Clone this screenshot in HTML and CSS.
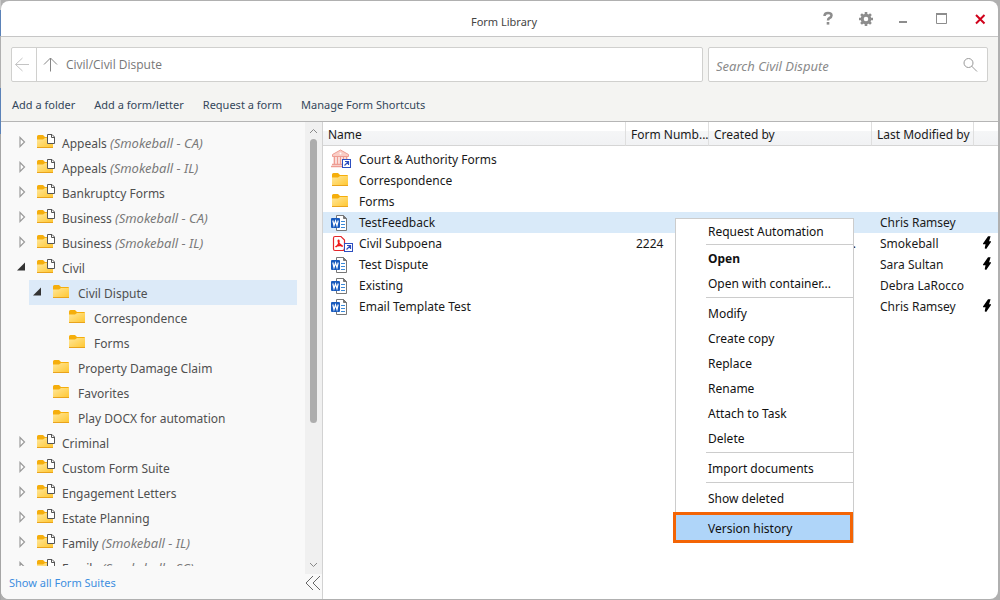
FILE: index.html
```html
<!DOCTYPE html>
<html lang="en">
<head>
<meta charset="utf-8">
<title>Form Library</title>
<link rel="stylesheet" href="styles.css">
</head>
<body>
<svg class="defs" aria-hidden="true">
  <defs>
    <linearGradient id="gold" x1="0" y1="0" x2="1" y2="1"><stop offset="0" stop-color="#ffe79a"/><stop offset="1" stop-color="#ffc62e"/></linearGradient>
    <symbol id="folder" viewBox="0 0 18 16"><path d="M0 2.5Q0 1 1.5 1H6L8 3H15Q16 3 16 4V6H0Z" fill="#f5ae0c"/><path d="M0 5.5H6L8 4H16V13Q16 14 15 14H1Q0 14 0 13Z" fill="url(#gold)"/><path d="M0 13.5H16" stroke="#e9a31c"/></symbol>
    <symbol id="suite" viewBox="0 0 18 16"><use href="#folder" width="18" height="16"/><path d="M10.5 .5H15L17.500 3V9.500H10.500Z" fill="#fff" stroke="#555"/><path d="M14.500 .5V3.500H17.500" fill="none" stroke="#555"/></symbol>
    <symbol id="closed" viewBox="0 0 10 12"><path d="M3 1.500L7.500 6L3 10.500Z" fill="#fff" stroke="#9b9b9b" stroke-width="1.200"/></symbol>
    <symbol id="opened" viewBox="0 0 10 12"><path d="M8 1.500V9.500H0Z" fill="#333"/></symbol>
    <symbol id="word" viewBox="0 0 22 20"><path d="M5.500 2.500H12.500L15.500 5.500V17.500H5.500Z" fill="#fff" stroke="#777"/><path d="M12.500 2.500V5.500H15.500Z" fill="#777" stroke="#777"/><path d="M10 8.500H14M10 11.500H14M10 14.500H14" stroke="#3c8ad8" stroke-width="1.200"/><rect y="5" width="9" height="10" rx="1" fill="#185abd"/><path d="M1.800 7.500L3 12.500L4.500 8L6 12.500L7.200 7.500" fill="none" stroke="#fff" stroke-width="1.200"/></symbol>
    <symbol id="shortcut" viewBox="0 0 9 9"><rect x=".5" y=".5" width="8" height="8" fill="#fff" stroke="#2d4fc0"/><path d="M2.500 6.500L6 3M3 2.500H6.500V6" fill="none" stroke="#2d4fc0" stroke-width="1.200"/></symbol>
    <symbol id="pdf" viewBox="0 0 22 20"><path d="M4 2.500H10L13.500 6V14Q13.500 16.500 11.500 16.500H4Q2.500 16.500 2.500 15V4Q2.500 2.500 4 2.500Z" fill="#fff" stroke="#e3262b" stroke-width="1.200"/><path d="M4.500 13Q8 11 8 7.500Q8 5.500 7.200 6.500Q7 9.500 11 11.800Q12 12.800 9.500 11.500Q6 11.200 4.500 13" fill="none" stroke="#f01818" stroke-width="1.400"/><use href="#shortcut" x="13" y="9" width="9" height="9"/></symbol>
    <symbol id="court" viewBox="0 0 22 20"><path d="M1.500 5.500L9.500 1L17.500 5.500V7.500H1.500Z" fill="#f9cdc6" stroke="#ee9d93"/><path d="M3.500 8V15M6.500 8V15M9.500 8V15M12.500 8V15M15.500 8V15" stroke="#ef9c92" stroke-width="1.700"/><path d="M1 15.500H18M0 17.500H18" stroke="#ee9d93" stroke-width="1.300"/><circle cx="9.500" cy="4.500" r="1" fill="#fff"/><use href="#shortcut" x="11" y="10" width="9" height="9"/></symbol>
    <symbol id="bolt" viewBox="0 0 8 14"><path d="M5.500 1L1 7.500H3.500L2.500 12.500L7 6H5L6.500 1Z" fill="#000" stroke="#000" stroke-width="1.600"/></symbol>
  </defs>
</svg>
<div class="window">
  <header class="titlebar">
    <h1 class="title">Form Library</h1>
    <div class="controls">
      <button class="control" aria-label="Help"><svg width="14" height="16" viewBox="0 0 14 16"><path d="M3.500 5Q3.500 2 7 2Q10.500 2 10.500 4.500Q10.500 6.200 8.500 7Q7 7.700 7 9.500" fill="none" stroke="#8d8d8d" stroke-width="2.500"/><rect x="5.700" y="11" width="2.600" height="2.600" fill="#8d8d8d"/></svg></button>
      <button class="control" aria-label="Settings"><svg width="14" height="14" viewBox="0 0 14 14"><circle cx="7" cy="7" r="3.800" fill="none" stroke="#8d8d8d" stroke-width="3"/><path d="M7 0V3M7 11V14M0 7H3M11 7H14M2.050 2.050L4 4M10 10L11.950 11.950M2.050 11.950L4 10M10 4L11.950 2.050" stroke="#8d8d8d" stroke-width="2.600"/></svg></button>
      <button class="control" aria-label="Minimize"><svg width="14" height="14" viewBox="0 0 14 14"><path d="M2 10H10" stroke="#8d8d8d" stroke-width="2"/></svg></button>
      <button class="control" aria-label="Maximize"><svg width="14" height="14" viewBox="0 0 14 14"><path d="M1.500 2V11.500H11.500V2" fill="none" stroke="#8d8d8d"/><path d="M1 2H12" stroke="#8d8d8d" stroke-width="2"/></svg></button>
      <button class="control" aria-label="Close"><svg width="14" height="14" viewBox="0 0 14 14"><path d="M3 3L11.500 11.500M11.500 3L3 11.500" stroke="#d0021b" stroke-width="2"/></svg></button>
    </div>
  </header>
  <section class="toolbar">
    <div class="bars">
      <div class="pathbar">
        <button class="back" aria-label="Back"><svg width="16" height="16" viewBox="0 0 16 16"><path d="M15 7.500H1.500M8.500 1L1.500 7.500L8.500 14" fill="none" stroke="#c4c4c4"/></svg></button>
        <button class="up" aria-label="Up"><svg width="16" height="16" viewBox="0 0 16 16"><path d="M7.500 14.500V1M1 7.500L7.500 1L14 7.500" fill="none" stroke="#858585"/></svg></button>
        <span>Civil/Civil Dispute</span>
      </div>
      <div class="searchbar">
        <input class="search" type="text" aria-label="Search Civil Dispute" placeholder="Search Civil Dispute">
        <svg width="16" height="16" viewBox="0 0 16 16"><circle cx="6.500" cy="6" r="4.500" fill="none" stroke="#999"/><path d="M9.500 9L15 14.500" stroke="#999"/></svg>
      </div>
    </div>
    <nav class="actions">
      <button class="action">Add a folder</button>
      <button class="action">Add a form/letter</button>
      <button class="action">Request a form</button>
      <button class="action">Manage Form Shortcuts</button>
    </nav>
  </section>
  <main class="content">
    <aside class="sidebar">
      <div class="treepane">
        <ul class="tree">
          <li><div class="node"><svg class="arrow"><use href="#closed"/></svg><svg class="nodeicon"><use href="#suite"/></svg><span>Appeals <i>(Smokeball - CA)</i></span></div></li>
          <li><div class="node"><svg class="arrow"><use href="#closed"/></svg><svg class="nodeicon"><use href="#suite"/></svg><span>Appeals <i>(Smokeball - IL)</i></span></div></li>
          <li><div class="node"><svg class="arrow"><use href="#closed"/></svg><svg class="nodeicon"><use href="#suite"/></svg><span>Bankruptcy Forms</span></div></li>
          <li><div class="node"><svg class="arrow"><use href="#closed"/></svg><svg class="nodeicon"><use href="#suite"/></svg><span>Business <i>(Smokeball - CA)</i></span></div></li>
          <li><div class="node"><svg class="arrow"><use href="#closed"/></svg><svg class="nodeicon"><use href="#suite"/></svg><span>Business <i>(Smokeball - IL)</i></span></div></li>
          <li><div class="node"><svg class="arrow"><use href="#opened"/></svg><svg class="nodeicon"><use href="#suite"/></svg><span>Civil</span></div>
            <ul class="branch">
              <li><div class="node selected"><svg class="arrow"><use href="#opened"/></svg><svg class="nodeicon"><use href="#folder"/></svg><span>Civil Dispute</span></div>
                <ul class="branch">
                  <li><div class="node leaf"><svg class="nodeicon"><use href="#folder"/></svg><span>Correspondence</span></div></li>
                  <li><div class="node leaf"><svg class="nodeicon"><use href="#folder"/></svg><span>Forms</span></div></li>
                </ul>
              </li>
              <li><div class="node leaf"><svg class="nodeicon"><use href="#folder"/></svg><span>Property Damage Claim</span></div></li>
              <li><div class="node leaf"><svg class="nodeicon"><use href="#folder"/></svg><span>Favorites</span></div></li>
              <li><div class="node leaf"><svg class="nodeicon"><use href="#folder"/></svg><span>Play DOCX for automation</span></div></li>
            </ul>
          </li>
          <li><div class="node"><svg class="arrow"><use href="#closed"/></svg><svg class="nodeicon"><use href="#suite"/></svg><span>Criminal</span></div></li>
          <li><div class="node"><svg class="arrow"><use href="#closed"/></svg><svg class="nodeicon"><use href="#suite"/></svg><span>Custom Form Suite</span></div></li>
          <li><div class="node"><svg class="arrow"><use href="#closed"/></svg><svg class="nodeicon"><use href="#suite"/></svg><span>Engagement Letters</span></div></li>
          <li><div class="node"><svg class="arrow"><use href="#closed"/></svg><svg class="nodeicon"><use href="#suite"/></svg><span>Estate Planning</span></div></li>
          <li><div class="node"><svg class="arrow"><use href="#closed"/></svg><svg class="nodeicon"><use href="#suite"/></svg><span>Family <i>(Smokeball - IL)</i></span></div></li>
          <li><div class="node"><svg class="arrow"><use href="#closed"/></svg><svg class="nodeicon"><use href="#suite"/></svg><span>Family <i>(Smokeball - SC)</i></span></div></li>
        </ul>
        <div class="scrollbar">
          <svg width="9" height="6" viewBox="0 0 9 6"><path d="M1 5L4.500 1.500L8 5" fill="none" stroke="#888"/></svg>
          <div class="track"><div class="thumb"></div></div>
          <svg width="9" height="6" viewBox="0 0 9 6"><path d="M1 1L4.500 4.500L8 1" fill="none" stroke="#888"/></svg>
        </div>
      </div>
      <footer class="sidefoot">
        <a class="showall" href="#">Show all Form Suites</a>
        <button class="collapse" aria-label="Collapse"><svg width="16" height="16" viewBox="0 0 16 16"><path d="M8 1L1 8L8 15M15 1L8 8L15 15" fill="none" stroke="#666"/></svg></button>
      </footer>
    </aside>
    <section class="files">
      <table class="list">
        <colgroup><col><col class="c-number"><col class="c-created"><col class="c-modified"><col class="c-flag"></colgroup>
        <thead><tr><th>Name</th><th>Form Numb...</th><th>Created by</th><th>Last Modified by</th><th></th></tr></thead>
        <tbody>
          <tr class="tall"><td><div class="name"><svg class="fileicon"><use href="#court"/></svg>Court &amp; Authority Forms</div></td><td></td><td></td><td></td><td></td></tr>
          <tr><td><div class="name"><svg class="foldericon"><use href="#folder"/></svg>Correspondence</div></td><td></td><td></td><td></td><td></td></tr>
          <tr><td><div class="name"><svg class="foldericon"><use href="#folder"/></svg>Forms</div></td><td></td><td></td><td></td><td></td></tr>
          <tr class="picked"><td><div class="name"><svg class="fileicon"><use href="#word"/></svg>TestFeedback</div></td><td></td><td></td><td>Chris Ramsey</td><td></td></tr>
          <tr><td><div class="name"><svg class="fileicon"><use href="#pdf"/></svg>Civil Subpoena</div></td><td class="number">2224</td><td class="more">...</td><td>Smokeball</td><td class="flag"><svg class="bolt"><use href="#bolt"/></svg></td></tr>
          <tr><td><div class="name"><svg class="fileicon"><use href="#word"/></svg>Test Dispute</div></td><td></td><td></td><td>Sara Sultan</td><td class="flag"><svg class="bolt"><use href="#bolt"/></svg></td></tr>
          <tr><td><div class="name"><svg class="fileicon"><use href="#word"/></svg>Existing</div></td><td></td><td></td><td>Debra LaRocco</td><td></td></tr>
          <tr><td><div class="name"><svg class="fileicon"><use href="#word"/></svg>Email Template Test</div></td><td></td><td></td><td>Chris Ramsey</td><td class="flag"><svg class="bolt"><use href="#bolt"/></svg></td></tr>
        </tbody>
      </table>
      <div class="menu" role="menu">
        <button class="item" role="menuitem">Request Automation</button>
        <hr class="rule tight">
        <button class="item default" role="menuitem">Open</button>
        <button class="item" role="menuitem">Open with container...</button>
        <hr class="rule">
        <button class="item" role="menuitem">Modify</button>
        <button class="item" role="menuitem">Create copy</button>
        <button class="item" role="menuitem">Replace</button>
        <button class="item" role="menuitem">Rename</button>
        <button class="item" role="menuitem">Attach to Task</button>
        <button class="item" role="menuitem">Delete</button>
        <hr class="rule">
        <button class="item" role="menuitem">Import documents</button>
        <hr class="rule">
        <button class="item" role="menuitem">Show deleted</button>
        <button class="item marked" role="menuitem">Version history</button>
      </div>
    </section>
  </main>
</div>
</body>
</html>
```

FILE: styles.css
```css
* { box-sizing: border-box; }
body {
  margin: 0;
  padding: 1px 2px 1px 1px;
  height: 100vh;
  font: 12px/16px "Noto Sans", "Open Sans", sans-serif;
  color: #1a1a1a;
  background: linear-gradient(90deg, transparent 1px, #b0b0b0 1px),
    linear-gradient(#c8c8c8 10px, #5b82b8 10px, #5b82b8 36px, #b0b0b0 36px, #b0b0b0 88px, #5b82b8 88px, #5b82b8 134px, #a6a6a6 134px);
}
button { border: 0; padding: 0; background: none; font: inherit; color: inherit; }
svg { display: block; flex: none; }
ul { list-style: none; margin: 0; padding: 0; }
.defs { position: absolute; width: 0; height: 0; }
.window {
  height: 100%;
  display: flex;
  flex-direction: column;
  overflow: hidden;
  border-radius: 8px;
  background: #fff;
}
.titlebar {
  display: grid;
  grid-template-columns: 1fr auto 1fr;
  align-items: center;
  height: 36px;
  padding: 5px 11px 0 20px;
  border-bottom: 1px solid #c6c6c6;
}
.title { grid-column: 2; margin: 0; padding-top: 2px; font-size: 11px; font-weight: 400; color: #444; }
.controls { display: flex; justify-content: flex-end; gap: 24px; padding-bottom: 5px; }
.control { display: grid; place-items: center; width: 14px; height: 20px; }
.toolbar { background: #f4f4f2; padding: 10px; border-bottom: 1px solid #b5b5b5; height: 85px; }
.bars { display: flex; gap: 5px; }
.pathbar, .searchbar { display: flex; align-items: center; height: 35px; border: 1px solid #d0d0ce; border-radius: 2px; background: #fff; }
.pathbar { flex: 1; color: #777; font-family: "Open Sans", "Noto Sans", sans-serif; }
.back { display: grid; place-items: center; width: 25px; height: 33px; padding-right: 4px; border-right: 1px solid #d0d0ce; }
.up { width: 16px; margin: 0 7px 0 6px; }
.searchbar { width: 280px; padding: 0 9px 0 7px; }
.search { flex: 1; min-width: 0; padding: 2px 0 0; border: 0; outline: 0; font: italic 13px/16px "Noto Sans", "Open Sans", sans-serif; background: transparent; }
.search::placeholder { color: #8a8a8a; opacity: 1; }
.actions { display: flex; gap: 19px; padding: 15px 1px 0; font-size: 11px; color: #33465a; }
.content { flex: 1; min-height: 0; display: flex; }
.sidebar { width: 322px; display: flex; flex-direction: column; background: #f9f9f9; border-right: 1px solid #d2d2d2; color: #505050; }
.treepane { flex: 1; min-height: 0; display: flex; }
.tree { flex: 1; overflow: hidden; padding: 8px 8px 0 12px; margin-bottom: 8px; }
.branch { padding-left: 16px; }
.node { display: flex; align-items: center; height: 25px; white-space: nowrap; }
.node span { padding: 2px 0 0 7px; }
.node i { font-size: 13px; color: #7a7a7a; }
.selected { background: #dceaf8; }
.arrow { width: 10px; height: 12px; margin: 0 10px 2px 4px; }
.nodeicon { width: 18px; height: 16px; margin-bottom: 2px; }
.leaf { padding-left: 24px; }
.scrollbar { width: 17px; display: flex; flex-direction: column; align-items: center; padding: 6px 0; background: #f0f0f0; }
.track { flex: 1; padding-top: 5px; }
.thumb { width: 7px; height: 284px; border-radius: 4px; background: #adadad; }
.sidefoot { display: flex; justify-content: space-between; height: 25px; padding: 0 1px 0 8px; }
.showall { padding-top: 1px; font-size: 11px; color: #3d8ee0; text-decoration: none; }
.collapse { height: 18px; }
.files { flex: 1; min-width: 0; position: relative; }
.list { width: 100%; table-layout: fixed; border-collapse: separate; border-spacing: 0; }
.c-number { width: 83px; }
.c-created { width: 163px; }
.c-modified { width: 102px; }
.c-flag { width: 24px; }
.list th {
  height: 24px;
  padding: 2px 4px 0 5px;
  text-align: left;
  font-weight: 400;
  white-space: nowrap;
  border-right: 1px solid #dfdfdf;
  border-bottom: 1px solid #d5d5d5;
  background: linear-gradient(#fff 40%, #f5f6f7 40%, #f1f2f4);
}
.list th:last-child { border-right: 0; }
.list td { height: 21px; padding: 1px 0 0 8px; white-space: nowrap; }
.list .tall td { height: 24px; padding-top: 3px; }
.list .picked td { background: #d9eaf9; }
.name { display: flex; align-items: center; height: 19px; }
.fileicon { width: 22px; height: 20px; margin: 0 6px 1px 0; }
.foldericon { width: 18px; height: 16px; margin: 0 9px 3px 1px; }
.list .number { padding-left: 10px; }
.list .more { text-align: right; padding-right: 16px; }
.list .flag { padding: 0 7px 2px 9px; }
.bolt { width: 8px; height: 14px; }
.menu {
  position: absolute;
  top: 96px;
  left: 352px;
  width: 179px;
  display: flex;
  flex-direction: column;
  border: 1px solid #ccc;
  border-bottom: 0;
  background: #fff;
}
.item { height: 25px; padding: 1px 0 0 32px; text-align: left; white-space: nowrap; color: #111; }
.default { font-weight: 700; }
.rule { width: auto; height: 1px; margin: 1px 0 3px 30px; border: 0; background: #ccc; }
.tight { margin-top: 0; margin-bottom: 1px; }
.marked { height: 31px; margin: 1px 0 0 -3px; padding-top: 2px; border: 3px solid #f36405; background: #afd5f9; }
```
